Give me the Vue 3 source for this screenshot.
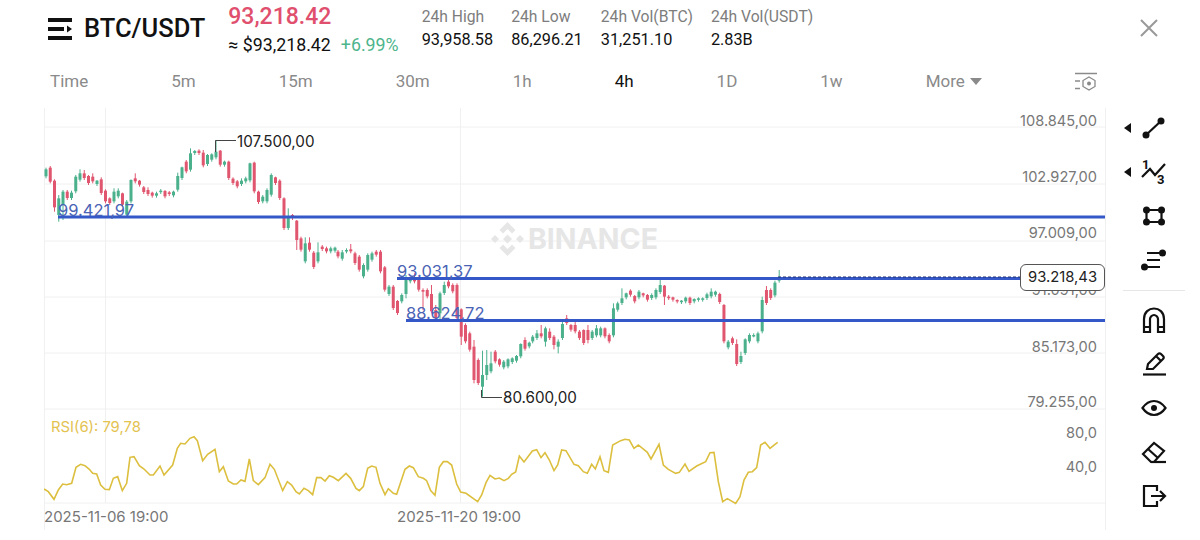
<script setup>
// chart data was read off at 3x, so each block has its own origin
const toCandles = (x0, y0, rows) =>
  rows.map(([up, wt, bt, wb, bb], i) => ({
    x: x0 + i * 4.25,
    up,
    wickTop: y0 + wt / 3,
    wickBottom: y0 + wb / 3,
    bodyTop: y0 + bt / 3,
    bodyHeight: Math.max(((bb ?? wb - 6) - bt) / 3, 1.5),
  }))

const candles = [
  ...toCandles(46, 120, [
    [1,143,148,175],[0,138,143,190,185],[0,178,182,275,262],[1,225,235,305,285],[1,210,215,300,255],[0,210,215,240],[1,212,218,240],
    [1,165,170,220],[1,148,160,185],[0,150,160,180],[0,165,168,195],[0,160,170,190],[1,180,182,198],[0,172,178,225],
    [0,208,212,250],[0,232,235,255],[1,205,215,250],[1,205,212,235],[0,218,220,260],[1,240,245,290],[1,178,180,250],
    [0,160,175,190],[0,180,182,200],[0,198,202,222],[0,202,210,228],[0,215,218,233],[1,215,220,233],[1,207,212,222],
    [0,210,213,235],[0,213,217,228],[1,212,215,232],[1,158,168,215],[1,140,142,180],[0,120,125,160],[1,85,100,155],
    [1,90,93,105],[0,88,92,105],[0,90,98,142],[1,102,105,138],[1,100,103,125],[1,60,95,118],[0,90,92,140],
    [1,122,125,140],[0,122,125,180],[0,172,176,195],[0,180,184,205],[1,175,182,198],[1,170,175,190],[1,128,130,187],
    [0,125,128,220],[0,212,215,252],[1,225,230,250],[1,205,210,250],[1,160,165,230],[0,170,172,195],[0,178,182,240],
    [0,232,235,330],[1,265,290,330],[0,282,285,300],[0,300,302,390,360],[0,350,355,395],[1,352,370,430],[0,352,368,395],
    [0,393,398,447],[1,367,397,430],[0,375,380,393],[0,380,385,400],[1,380,385,400],[1,380,383,398],
  ]),
  ...toCandles(338, 220, [
    [0,90,95,115],[1,90,97,122],[1,85,90,100],[0,72,88,100],[0,95,100,135],[0,105,110,155],[1,130,135,175],
    [1,100,105,155],[1,95,100,125],[0,90,95,110],[0,90,95,160],[0,138,142,215],[1,195,200,228],[0,195,200,270],
    [0,240,243,285],[1,220,225,250],[1,165,180,235,222],[1,170,175,190],[0,160,172,190],[0,175,180,215],[0,205,210,270,215],
    [0,205,210,235],[0,195,222,280],[0,255,270,300],[1,215,220,300,280],[1,185,195,225],[0,180,185,205],[0,190,195,220],
    [0,190,195,300],[0,265,268,375,350],[0,310,315,370],[0,335,340,395],[0,360,380,490,480],[0,415,420,495],[1,392,465,530,500],
    [1,390,435,480,465],[1,395,430,460],[0,390,395,430],[0,415,418,440],[1,420,425,448],[1,415,418,445],[1,412,415,432],
    [1,405,408,428],[1,370,372,415],[0,352,360,392],[1,365,368,385],
  ]),
  ...toCandles(532.7, 250, [
    [1,255,260,280],[1,240,250,270],[0,225,250,265],[1,230,235,290,275],[0,235,245,270],[0,255,260,298,285],[1,268,275,310,290],
    [1,210,222,270],[0,195,205,225],[0,222,225,245],[0,215,225,250],[0,240,245,270],[0,238,240,285],[0,225,240,280,270],
    [1,240,245,270],[1,225,235,262],[1,230,235,262],[0,232,235,265],[0,250,255,280],[1,160,175,262],[1,155,160,185],
    [1,115,145,165],[1,128,130,148],[0,118,122,140],[0,135,138,160],[1,120,125,148],[0,128,130,142],[0,132,135,155],
    [1,130,135,150],[1,115,120,148],[1,90,105,132],[0,105,107,165,140],[0,135,140,150],[0,140,142,155],[0,148,150,160],
    [1,150,152,162],[1,140,143,160],[0,140,143,165],[1,145,147,160],[1,142,145,155],[1,142,145,155],[1,128,133,150],
    [1,115,125,145],[1,122,125,140],[0,128,132,162],[0,162,165,280],[1,270,275,298],[0,260,265,285],[0,268,282,348],
    [1,305,318,342],[1,265,268,315],[1,250,255,280],[1,250,255,262],[1,245,250,280],[1,140,150,250],[0,108,120,165],
    [0,115,120,150],[1,92,98,142],[1,60,85,98],
  ]),
]

const toPoints = (x0, y0, pts) =>
  pts.map(([x, y]) => `${x0 + x / 3},${y0 + y / 3}`).join(' ')

const rsiLeft = [
  [12,237],[25,245],[42,268],[55,240],[68,222],[80,224],[95,220],[108,172],[122,163],[135,167],[148,178],[158,190],[170,192],
  [182,225],[195,238],[208,239],[220,205],[233,200],[247,242],[260,220],[270,142],[282,140],[298,167],[312,177],[330,195],
  [340,195],[360,168],[372,195],[398,165],[412,115],[422,100],[435,102],[450,85],[462,80],[472,92],[488,152],[503,133],
  [525,118],[538,185],[550,170],[565,213],[580,222],[590,222],[603,210],[615,214],[628,147],[640,212],[655,224],[675,203],
  [690,163],[703,178],[728,242],[742,215],[755,225],[768,245],[778,252],[792,235],[805,242],[818,254],[830,203],[843,203],
  [855,213],[868,197],[880,202],[895,212],[918,190],[932,205],[948,235],[958,242],[970,230],[983,175],[995,168],[1008,172],
  [1020,220],[1035,254],[1045,236],[1060,250],[1070,253],[1095,178],[1108,168],[1120,173],[1135,200],
]
const rsiRight = [
  [40,205],[50,212],[62,242],[75,256],[88,172],[100,155],[112,155],[125,165],[140,222],[152,246],[168,250],[203,275],[215,255],
  [228,218],[240,196],[255,207],[268,204],[282,212],[295,205],[305,193],[317,186],[328,138],[342,156],[367,123],[380,119],
  [393,143],[405,128],[418,150],[432,182],[443,165],[455,120],[468,122],[492,163],[505,167],[520,185],[532,190],[545,163],
  [556,177],[570,140],[582,182],[595,187],[608,105],[632,92],[645,88],[658,90],[672,115],[685,105],[712,127],[723,147],
  [747,103],[760,165],[775,178],[797,190],[808,187],[825,162],[837,184],[860,168],[887,155],[900,128],[912,127],[925,215],
  [938,275],[952,266],[977,280],[990,260],[1002,210],[1015,187],[1027,185],[1040,173],[1052,105],[1065,97],[1080,115],
  [1095,103],[1103,97],
]
const rsiLine = toPoints(40, 410, rsiLeft) + ' ' + toPoints(410, 410, rsiRight)

const stats = [
  { label: '24h High', value: '93,958.58' },
  { label: '24h Low', value: '86,296.21' },
  { label: '24h Vol(BTC)', value: '31,251.10' },
  { label: '24h Vol(USDT)', value: '2.83B' },
]
const tabs = ['Time', '5m', '15m', '30m', '1h', '4h', '1D', '1w']
const priceAxis = [
  { y: 126, text: '108.845,00' },
  { y: 182, text: '102.927,00' },
  { y: 238, text: '97.009,00' },
  { y: 295, text: '91.091,00' },
  { y: 352, text: '85.173,00' },
  { y: 407, text: '79.255,00' },
]
const gridY = [127, 184, 241, 297, 353, 409, 503]
const levels = [
  { x: 58, y: 217, labelX: 58, labelY: 216, text: '99.421,97' },
  { x: 397, y: 278.5, labelX: 397, labelY: 277, text: '93.031,37' },
  { x: 406, y: 320.5, labelX: 406, labelY: 319, text: '88.624,72' },
]
</script>

<template>
  <div class="page">
    <header class="header">
      <svg class="logo" width="24" height="22" viewBox="0 0 24 22">
        <rect x="0" y="0" width="24" height="4" />
        <rect x="0" y="9" width="16" height="4" />
        <path d="M19 7.5 L24 11 L19 14.5 Z" />
        <rect x="0" y="18" width="24" height="4" />
      </svg>
      <span class="pair">BTC/USDT</span>
      <div class="price">
        <div class="last">93,218.42</div>
        <div class="sub">
          <span>≈ $93,218.42</span>
          <span class="change">+6.99%</span>
        </div>
      </div>
      <div class="stats">
        <div v-for="s in stats" :key="s.label" class="stat">
          <div class="stat-label">{{ s.label }}</div>
          <div class="stat-value">{{ s.value }}</div>
        </div>
      </div>
      <svg class="close" width="20" height="20" viewBox="0 0 20 20">
        <path d="M2 2 L18 18 M18 2 L2 18" />
      </svg>
    </header>

    <nav class="tabs">
      <span v-for="t in tabs" :key="t" class="tab" :class="{ active: t === '4h' }">{{ t }}</span>
      <span class="tab more">More<i class="caret"></i></span>
      <svg class="settings" width="24" height="20" viewBox="0 0 24 20">
        <path class="thin" d="M1 1.5 H23 M1 9 H6 M1 16.5 H6" />
        <path class="thin" d="M15 5 L21 8.5 V14.5 L15 18 L9 14.5 V8.5 Z" />
        <circle cx="15" cy="11.5" r="2" fill="#8a8a8a" />
      </svg>
    </nav>

    <main class="main">
      <div class="chart">
        <svg width="1062" height="440" viewBox="44 100 1062 440">
          <g class="grid">
            <line v-for="y in gridY" :key="y" x1="44" x2="1105" :y1="y" :y2="y" />
            <line x1="44.5" x2="44.5" y1="108" y2="530" />
            <line x1="105.5" x2="105.5" y1="108" y2="503" />
            <line x1="460.5" x2="460.5" y1="108" y2="503" />
            <line x1="1105.5" x2="1105.5" y1="108" y2="530" />
          </g>

          <!-- watermark -->
          <g class="mark">
            <path d="M507.500 222 l8 8 -3.500 3.500 -4.500 -4.500 -4.500 4.500 -3.500 -3.500 Z" />
            <path d="M495 235 l4 4 -4 4 -4 -4 Z M520 235 l4 4 -4 4 -4 -4 Z M507.500 234.500 l4.500 4.500 -4.500 4.500 -4.500 -4.500 Z" />
            <path d="M507.500 256 l8 -8 -3.500 -3.500 -4.500 4.500 -4.500 -4.500 -3.500 3.500 Z" />
          </g>
          <text class="mark-text" x="528" y="249">BINANCE</text>

          <g v-for="(c, i) in candles" :key="i" :class="c.up ? 'up' : 'down'">
            <line :x1="c.x" :x2="c.x" :y1="c.wickTop" :y2="c.wickBottom" />
            <rect :x="c.x - 1.5" :y="c.bodyTop" width="3" :height="c.bodyHeight" />
          </g>

          <path class="leader" d="M215.500 152 V140.500 H236 M481.500 390 V397.500 H502" />
          <text class="note" x="237" y="147">107.500,00</text>
          <text class="note" x="503" y="403">80.600,00</text>

          <text v-for="p in priceAxis" :key="p.text" class="axis" x="1097" :y="p.y" text-anchor="end">{{ p.text }}</text>

          <g v-for="l in levels" :key="l.text">
            <line class="level" :x1="l.x" x2="1105" :y1="l.y" :y2="l.y" />
            <text class="level-text" :x="l.labelX" :y="l.labelY">{{ l.text }}</text>
          </g>
          <line class="last-line" x1="778" x2="1021" y1="277" y2="277" />

          <text class="axis" x="1097" y="438" text-anchor="end">80,0</text>
          <text class="axis" x="1097" y="472" text-anchor="end">40,0</text>
          <text class="rsi-text" x="51" y="432">RSI(6): 79,78</text>
          <polyline class="rsi" :points="rsiLine" />
          <text class="date" x="44" y="522">2025-11-06 19:00</text>
          <text class="date" x="397" y="522">2025-11-20 19:00</text>
        </svg>
        <div class="last-tag">93.218,43</div>
      </div>

      <aside class="rail">
        <div class="tool">
          <i class="flag"></i>
          <svg width="28" height="28" viewBox="0 0 28 28">
            <path d="M6 21 L21 7" />
            <circle class="dot" cx="6" cy="21" r="3.500" />
            <circle class="dot" cx="21" cy="7" r="3.500" />
          </svg>
        </div>
        <div class="tool">
          <i class="flag"></i>
          <svg width="28" height="28" viewBox="0 0 28 28">
            <path d="M2 19 L10 11 L15 17 L25 6" />
            <text class="digit" x="2" y="11">1</text>
            <text class="digit" x="17" y="26">3</text>
          </svg>
        </div>
        <div class="tool">
          <svg width="28" height="28" viewBox="0 0 28 28">
            <path d="M6.500 8 H21.500 V20 H6.500 Z" />
            <circle class="dot" cx="6.500" cy="8" r="3.500" />
            <circle class="dot" cx="21.500" cy="8" r="3.500" />
            <circle class="dot" cx="6.500" cy="20" r="3.500" />
            <circle class="dot" cx="21.500" cy="20" r="3.500" />
          </svg>
        </div>
        <div class="tool">
          <svg width="28" height="28" viewBox="0 0 28 28">
            <path d="M7 7 H22 M7 14 H20 M5 21 H20" />
            <circle class="dot" cx="22.500" cy="7" r="3.500" />
            <circle class="dot" cx="4.500" cy="21" r="3.500" />
          </svg>
        </div>
        <div class="divider"></div>
        <div class="tool">
          <svg width="28" height="28" viewBox="0 0 28 28">
            <path d="M4 26 V13 C4 6 9 2.500 14 2.500 C19 2.500 24 6 24 13 V26 H18 V13 C18 11 16 9 14 9 C12 9 10 11 10 13 V26 Z" />
            <path d="M4 21 H10 M18 21 H24" />
          </svg>
        </div>
        <div class="tool">
          <svg width="28" height="28" viewBox="0 0 28 28">
            <path d="M7 19 L8 14 L18 4 C19 3 20 3 21 4 L23 6 C24 7 24 8 23 9 L13 19 Z M16 6 L21 11" />
            <path d="M3 24.500 H26" />
          </svg>
        </div>
        <div class="tool">
          <svg width="28" height="28" viewBox="0 0 28 28">
            <path d="M2.500 14 C6 9 10 7 14 7 C18 7 22 9 25.500 14 C22 19 18 21 14 21 C10 21 6 19 2.500 14 Z" />
            <circle class="dot" cx="14" cy="14" r="3" />
          </svg>
        </div>
        <div class="tool">
          <svg width="28" height="28" viewBox="0 0 28 28">
            <path d="M3 16 L14 5 L24 13 L14 24 H11 Z M8 11 L18 20" />
            <path d="M11 24 H26" />
          </svg>
        </div>
        <div class="tool">
          <svg width="28" height="28" viewBox="0 0 28 28">
            <path d="M17 9 V4 H4 V24 H17 V19" />
            <path d="M11 14 H25 M20 9 L25 14 L20 19" />
          </svg>
        </div>
      </aside>
    </main>
  </div>
</template>

<style scoped>
.page {
  width: 1200px;
  height: 540px;
  overflow: hidden;
  background: #fff;
  color: #111;
  font-family: Roboto, "Liberation Sans", sans-serif;
}

.header {
  position: relative;
  display: flex;
  height: 62px;
  padding-left: 48px;
  box-sizing: border-box;
}
.logo {
  margin-top: 18px;
  fill: #111;
}
.pair {
  margin-left: 12px;
  margin-top: 13px;
  font-size: 25.5px;
  font-weight: 500;
  line-height: 30px;
}
.price {
  margin-left: 23px;
  margin-top: 3px;
}
.last {
  font-size: 23px;
  font-weight: 500;
  line-height: 28px;
  color: #e0506e;
}
.sub {
  display: flex;
  gap: 10px;
  margin-top: 4px;
  font-size: 17.8px;
  line-height: 20px;
}
.change {
  color: #4db58c;
}
.stats {
  display: flex;
  gap: 18px;
  margin-left: 23px;
  margin-top: 7px;
  font-size: 15.7px;
}
.stat-label {
  line-height: 20px;
  color: #7d7d7d;
}
.stat-value {
  margin-top: 3px;
  line-height: 20px;
  font-size: 16.3px;
}
.close {
  position: absolute;
  left: 1139px;
  top: 18px;
  fill: none;
  stroke: #999;
  stroke-width: 2;
}

.tabs {
  position: relative;
  display: flex;
  align-items: center;
  gap: 83px;
  height: 38px;
  padding-left: 50px;
  font-size: 17px;
  color: #8a8a8a;
}
.tab.active {
  color: #111;
}
.more {
  display: flex;
  align-items: center;
  gap: 5px;
}
.caret {
  width: 0;
  height: 0;
  border-left: 6px solid transparent;
  border-right: 6px solid transparent;
  border-top: 7px solid #8a8a8a;
}
.settings {
  position: absolute;
  left: 1074px;
  top: 10px;
}
.thin {
  fill: none;
  stroke: #8a8a8a;
  stroke-width: 1.3;
}

.main {
  display: flex;
  height: 440px;
  padding-left: 44px;
}
.chart {
  position: relative;
  width: 1062px;
  height: 440px;
  font-family: Inter, sans-serif;
}
.chart svg {
  display: block;
}
.grid line {
  stroke: #f0f0f0;
  stroke-width: 1;
}
.up line,
.down line {
  stroke-width: 1;
}
.up line {
  stroke: #4bb08c;
}
.up rect {
  fill: #4bb08c;
}
.down line {
  stroke: #e0566f;
}
.down rect {
  fill: #e0566f;
}
.leader {
  fill: none;
  stroke: #444;
  stroke-width: 1;
}
.note {
  font-size: 15.200px;
  fill: #222;
}
.axis {
  font-size: 14.600px;
  fill: #777;
}
.date {
  font-size: 15px;
  fill: #777;
}
.level {
  stroke: #3558c8;
  stroke-width: 3;
}
.level-text {
  font-size: 16.500px;
  fill: #4a63b5;
}
.last-line {
  stroke: #1d2f6e;
  stroke-width: 1;
  stroke-dasharray: 3 2;
}
.rsi {
  fill: none;
  stroke: #dcbf3f;
  stroke-width: 1.6;
}
.rsi-text {
  font-size: 14.800px;
  fill: #e3c24f;
}
.mark {
  fill: #e6e6e6;
}
.mark-text {
  font-family: Inter, sans-serif;
  font-size: 28.500px;
  font-weight: 700;
  fill: #e6e6e6;
}
.last-tag {
  position: absolute;
  left: 976px;
  top: 164px;
  box-sizing: border-box;
  width: 85px;
  height: 27px;
  border: 1px solid #555;
  border-radius: 6px;
  background: #fff;
  font-size: 14.800px;
  line-height: 25px;
  text-align: center;
  color: #222;
}

.rail {
  width: 94px;
  padding-top: 6px;
  box-sizing: border-box;
}
.tool {
  position: relative;
  display: flex;
  align-items: center;
  justify-content: center;
  width: 62px;
  height: 44px;
  margin-left: 17px;
}
.tool svg {
  fill: none;
  stroke: #111;
  stroke-width: 2.200;
}
.tool .dot {
  fill: #111;
  stroke: none;
}
.tool .digit {
  fill: #111;
  stroke: none;
  font-family: Roboto, sans-serif;
  font-size: 13px;
  font-weight: 700;
}
.flag {
  position: absolute;
  left: 1px;
  top: 17px;
  width: 0;
  height: 0;
  border-top: 5px solid transparent;
  border-bottom: 5px solid transparent;
  border-right: 7px solid #111;
}
.divider {
  width: 62px;
  height: 1px;
  margin: 8px 0 7px 17px;
  background: #e6e6e6;
}
</style>
